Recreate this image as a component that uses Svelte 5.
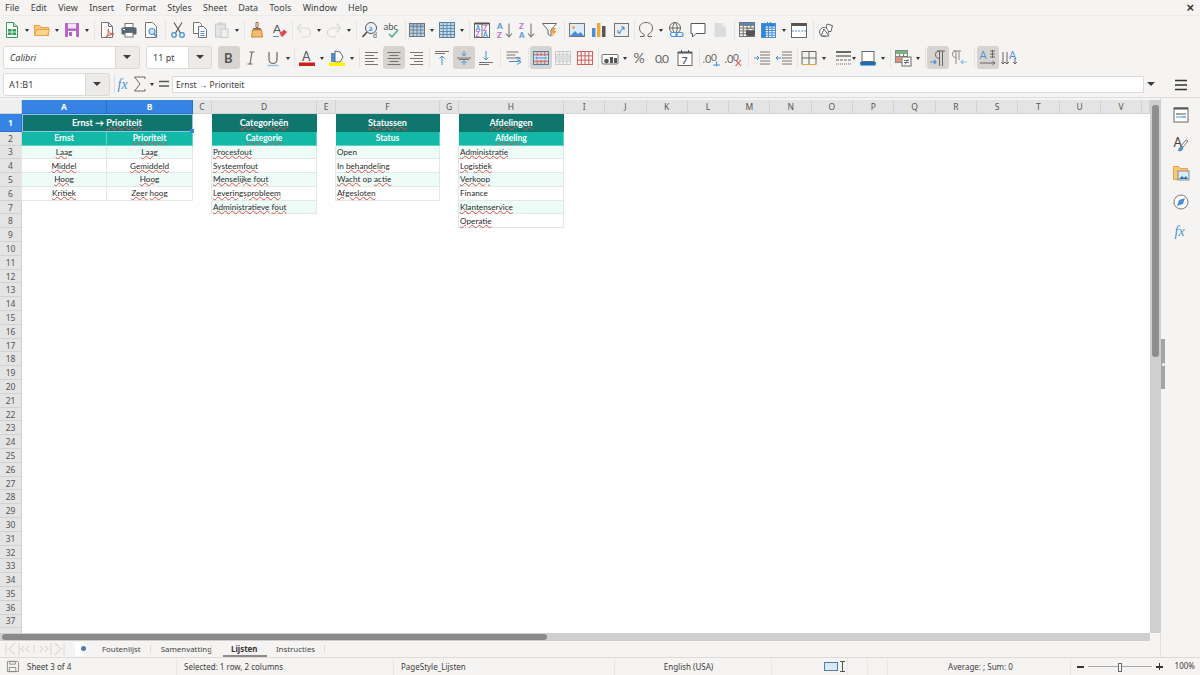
<script>
  const menus = ['File','Edit','View','Insert','Format','Styles','Sheet','Data','Tools','Window','Help'];
  const grid = (x,y,w,h,c,r,col,head='') => {
    let s = head ? `<rect x="${x}" y="${y}" width="${w}" height="${h/(r)}" fill="${head}"/>` : '';
    s += `<rect x="${x}" y="${y}" width="${w}" height="${h}" fill="none" stroke="${col}"/>`;
    for (let i=1;i<c;i++) s += `<path d="M${x+i*w/c} ${y}v${h}" stroke="${col}"/>`;
    for (let i=1;i<r;i++) s += `<path d="M${x} ${y+i*h/r}h${w}" stroke="${col}"/>`;
    return s;
  };
  const lines = (x,y,ws,gap,col) => ws.map((w,i)=>`<path d="M${x} ${y+i*gap+.5}h${w}" stroke="${col}"/>`).join('');
  const clines = (cx,y,ws,gap,col) => ws.map((w,i)=>`<path d="M${cx-w/2} ${y+i*gap+.5}h${w}" stroke="${col}"/>`).join('');
  const rlines = (rx,y,ws,gap,col) => ws.map((w,i)=>`<path d="M${rx-w} ${y+i*gap+.5}h${w}" stroke="${col}"/>`).join('');
  const txt = (x,y,s,size,col,w=400) => `<text x="${x}" y="${y}" font-family="Lato" font-size="${size}" font-weight="${w}" fill="${col}">${s}</text>`;
  const G='#747474', B='#4a90d9', L='#c9c9c9';
  const icons = {
    new:`<path d="M3.5 1.5h7l4 4v11h-11z" fill="#fff" stroke="#3c9a5f"/><path d="M10.5 1.5v4h4" fill="#bfe3cb" stroke="#3c9a5f"/><rect x="5" y="8" width="8" height="6" fill="#3c9a5f"/><path d="M9 8v6M5 11h8" stroke="#cfeeda"/>`,
    open:`<path d="M1.5 14.5V4.5h5l2 2h7v8z" fill="#f9c778" stroke="#e8a34a"/><path d="M1.5 14.5l2-6h13l-2 6z" fill="#fcd592" stroke="#e8a34a"/>`,
    save:`<path d="M2 2h14v14H2z" fill="#b865c6"/><rect x="5" y="2.5" width="8" height="5" fill="#f3e3f6"/><rect x="5" y="10" width="8" height="6" fill="#fff"/><rect x="6" y="11" width="3" height="4" fill="#b865c6"/>`,
    pdf:`<path d="M3.5 1.5h7l4 4v11h-11z" fill="#fff" stroke="${G}"/><path d="M10.5 1.5v4h4" fill="none" stroke="${G}"/><path d="M8 16c3-3 2-7 2-8 1 4 3 5 6 5-3 0-5 1-8 3z" fill="#f3c4c0" stroke="#d8453c" stroke-width=".9"/>`,
    print:`<rect x="5" y="2.5" width="8" height="4" fill="#fff" stroke="${G}"/><rect x="1.5" y="6.5" width="15" height="7" rx="1" fill="#566773"/><rect x="5" y="11.5" width="8" height="4.5" fill="#fff" stroke="${G}"/><path d="M3 8.5h2" stroke="#fff"/>`,
    preview:`<path d="M3.5 1.5h7l4 4v11h-11z" fill="#fff" stroke="${G}"/><circle cx="10" cy="10.5" r="3" fill="#d6e8f8" stroke="${B}" stroke-width="1.2"/><path d="M12 13l3 3" stroke="${B}" stroke-width="1.6"/>`,
    cut:`<path d="M5 1.500l6.500 10.500M13 1.500L6.500 12" stroke="#555" stroke-width="1.100"/><circle cx="5" cy="14" r="2.300" fill="none" stroke="${B}" stroke-width="1.300"/><circle cx="13" cy="14" r="2.300" fill="none" stroke="${B}" stroke-width="1.300"/>`,
    copy:`<path d="M2.500 1.500h6l2 2v9h-8z" fill="#fff" stroke="${G}"/><path d="M7.500 5.500h5l3 3v8h-8z" fill="#fff" stroke="${G}"/>${lines(9.5,10,[4,4,4],2,B)}`,
    paste:`<rect x="2.500" y="3" width="10" height="13" fill="#e4e4e4" stroke="${L}"/><rect x="5" y="1.500" width="5" height="3" fill="#d0d0d0"/><path d="M8 8h7v8.500H8z" fill="#efefef" stroke="${L}"/>`,
    clone:`<path d="M8 1.500h2v5H8z" fill="#fff" stroke="#a0662a"/><path d="M5 7h8v2H5z" fill="#777"/><path d="M4.500 9h9l1 7h-11z" fill="#f7bb76" stroke="#d4832e"/>`,
    clear:txt(3,12,'A',12,'#555')+`<path d="M3 15.500h6" stroke="${B}"/><path d="M10 12.500l4-4 3 2.500-4 4.500h-2z" fill="#e5484d"/>`,
    undo:`<path d="M3 7h8a4.500 4.500 0 0 1 0 9H7" fill="none" stroke="#d8d8d8" stroke-width="1.200"/><path d="M6.500 2.500L2.500 7l4 4.500" fill="none" stroke="#d8d8d8" stroke-width="1.200"/>`,
    redo:`<path d="M15 7H7a4.500 4.500 0 0 0 0 9h4" fill="none" stroke="#d8d8d8" stroke-width="1.200"/><path d="M11.500 2.500l4 4.500-4 4.500" fill="none" stroke="#d8d8d8" stroke-width="1.200"/>`,
    find:`<circle cx="10" cy="7" r="5.500" fill="#eaf3fb" stroke="#555"/><path d="M6 11l-4.500 5" stroke="#555" stroke-width="1.800"/>`+txt(7.5,9.500,'a',8,B,700)+txt(12,16.500,'d',7,'#555'),
    spell:txt(.5,8.500,'abc',9.500,'#555')+`<path d="M6 13l3 3 6-7" fill="none" stroke="#4caf7a" stroke-width="1.500"/>`,
    table:grid(1.5,2.5,15,13,4,4,G,'#8fbde9')+`<rect x="2" y="6" width="14" height="9" fill="#5b9bd5" opacity=".35"/>`,
    cols:grid(1.5,1.5,15,15,4,5,'#5d7f99')+`<rect x="2" y="2" width="14" height="14" fill="#6aa7de" opacity=".35"/>`,
    sort:`<rect x="1.500" y="2.500" width="15" height="14" fill="#fff" stroke="#666"/><rect x="1.500" y="1.500" width="15" height="2" fill="#555"/><path d="M9 3v13.500" stroke="#666"/>`+txt(2.500,10,'A',7,B,700)+txt(2.500,16,'Z',7,'#c56bcf',700)+txt(10,10,'Z',7,'#c56bcf',700)+txt(10,16,'A',7,B,700),
    az:txt(1,8,'A',8,B,700)+txt(1,16.500,'Z',8,'#c56bcf',700)+`<path d="M13 2.500v13M10 12.500l3 3.500 3-3.500" fill="none" stroke="#777" stroke-width="1.100"/>`,
    za:txt(1,8,'Z',8,'#c56bcf',700)+txt(1,16.500,'A',8,B,700)+`<path d="M13 2.500v13M10 12.500l3 3.500 3-3.500" fill="none" stroke="#777" stroke-width="1.100"/>`,
    filter:`<path d="M1.500 2.500h14l-5.500 6.500v6l-3-2v-4z" fill="#fff" stroke="#666"/><path d="M12 7l-2.500 5h2.500l-1.500 4.500 5-6.500h-2.500l2-3z" fill="#f4a03a"/>`,
    image:`<rect x="1.500" y="2.500" width="15" height="13" fill="#d9ecfb" stroke="${G}"/><circle cx="5.500" cy="6.500" r="1.500" fill="#f4a83a"/><path d="M2 15l5-5 3 3 2.500-2 3.500 4z" fill="#4a90d9"/>`,
    chart:`<rect x="2" y="7" width="3.500" height="9" fill="#4a90d9"/><rect x="7" y="2" width="3.500" height="14" fill="#f4a83a"/><rect x="12" y="5" width="3.500" height="11" fill="#555"/>`,
    pivot:`<rect x="2.500" y="2.500" width="14" height="13" fill="#efefef" stroke="${G}"/><path d="M7 12l5-6M12 6h-3M12 6v3M6 12h3M6 12v-3" stroke="${B}" fill="none" stroke-width="1.100"/>`,
    omega:`<path d="M3 15.500h4v-2c-3-1.500-4.500-3.500-4.500-6.500 0-3.500 2.800-5.500 6.500-5.500s6.500 2 6.500 5.500c0 3-1.500 5-4.500 6.500v2h4" fill="none" stroke="#666"/>`,
    link:`<circle cx="8" cy="7" r="5.500" fill="none" stroke="#666"/><path d="M2.500 7h11M8 1.500c-3 3-3 8 0 11M8 1.500c3 3 3 8 0 11" fill="none" stroke="#666"/><rect x="3.500" y="11.500" width="6.500" height="4" rx="2" fill="#fff" stroke="${B}" stroke-width="1.200"/><rect x="9" y="11.500" width="7" height="4" rx="2" fill="none" stroke="${B}" stroke-width="1.200"/>`,
    comment:`<path d="M2 2.500h14v10H7l-3.500 3.500v-3.500H2z" fill="#fff" stroke="#555"/>`,
    hf:`<path d="M3.500 2h8l3.500 3.500V16h-11.500z" fill="#dcdcdc"/><path d="M11.500 2v3.500H15" fill="#eee"/>`,
    freeze:grid(1.5,1.5,15,14,4,5,G,'#4a90d9')+`<rect x="8" y="9" width="9" height="6" rx="2" fill="#555"/><rect x="10" y="7.500" width="5" height="2" fill="#fff" stroke="#555" stroke-width=".6"/>`,
    freezeb:grid(1.5,2.5,14,14,4,6,B)+`<rect x="2" y="3" width="3.500" height="13" fill="#2f86d6"/><rect x="2" y="3" width="13" height="2.300" fill="#2f86d6"/><path d="M7 1l2 2 2-2" fill="none" stroke="#2f86d6"/>`,
    split:`<rect x="1.500" y="2.500" width="15" height="14" fill="#fff" stroke="#666"/><rect x="1.500" y="2" width="15" height="3" fill="#555"/><path d="M2 10h14" stroke="${B}" stroke-dasharray="2 1"/>`,
    shapes:`<path d="M9 3l5.500 1.500-1.500 6H8z" fill="#fff" stroke="#666"/><circle cx="6" cy="11" r="4.500" fill="#fff" stroke="#666"/><path d="M6 8l5 7H3z" fill="#fff" stroke="#666"/>`,
    bold:txt(4,14,'B',13,'#555',700),
    italic:`<path d="M7.500 3h5M5.500 15h5M10 3L8 15" stroke="#666" stroke-width="1.100" fill="none"/>`,
    under:`<path d="M5 3v7.500a4 4 0 0 0 8 0V3" fill="none" stroke="#666" stroke-width="1.200"/><path d="M3.500 16.500h11" stroke="#8ec0ea" stroke-width="1.400"/>`,
    fcolor:txt(4,12,'A',12.500,'#555')+`<rect x="1" y="13.500" width="16" height="3.500" fill="#c9211e"/>`,
    bcolor:`<path d="M3 4h7l3 3v6H3z" fill="#4a90d9"/><path d="M7 2l5 1 3 5-3 5H7z" fill="#fff" stroke="#666"/><rect x="1" y="13.500" width="16" height="3.500" fill="#fff200"/>`,
    left:lines(2,3,[13,9,13,9,13],3,G),
    center:clines(9,3,[13,9,13,9,13],3,G),
    right:rlines(16,3,[13,9,13,9,13],3,G),
    top:lines(2,2,[14,10],2,G)+`<path d="M9 16V7M6.500 9.500L9 7l2.500 2.500" fill="none" stroke="${B}"/>`,
    vcenter:`<path d="M2 9h14M4 10.500h10" stroke="${G}"/><path d="M9 2v5M6.500 4.500L9 7l2.500-2.500M9 16v-4M6.500 14L9 11.500l2.500 2.500" fill="none" stroke="${B}"/>`,
    bottom:lines(2,13,[14,10],2,G)+`<path d="M9 2v9M6.500 8.500L9 11l2.500-2.500" fill="none" stroke="${B}"/>`,
    wrap:lines(1.500,2.500,[12,9,14],3,G)+`<path d="M4 12.500h9a2 2 0 0 0 0-4h-2" fill="none" stroke="${B}"/><path d="M12 10.500l4 2.500-4 2.500" fill="none" stroke="${B}"/>`,
    merge:grid(1.5,2.5,15,13,4,4,'#c56b66')+`<rect x="2" y="7" width="14" height="4" fill="#d6e6f5"/><path d="M4 9h10M5 8l-1.500 1L5 10M13 8l1.500 1L13 10" fill="none" stroke="${B}"/><path d="M1.500 2.500h15v13h-15z" fill="none" stroke="#4a7fb0"/>`,
    unmerge:grid(1.5,2.5,15,13,4,4,'#c9c9c9')+`<rect x="2" y="7" width="14" height="4" fill="#dcdcdc"/>`,
    msplit:grid(1.5,2.5,15,13,4,3,'#d0625c'),
    fmt:`<rect x="1" y="5.500" width="16" height="9.500" rx="1" fill="#fff" stroke="${G}"/><circle cx="5.500" cy="12" r="2.300" fill="#555"/><rect x="9" y="8" width="3" height="6" fill="#555"/><rect x="13" y="9" width="3" height="5" fill="#555"/>`,
    pct:txt(1.500,14,'%',14,'#666'),
    num:txt(1,14,'0',12,'#666')+txt(8,14,'0',12,'#666')+`<circle cx="8" cy="13.500" r=".7" fill="#666"/>`,
    date:`<rect x="2" y="3.500" width="14" height="13" fill="#fff" stroke="#666"/><rect x="2" y="2.500" width="14" height="2" fill="#555"/><path d="M5.500 1v3M12.500 1v3" stroke="#555"/>`+txt(5.800,14.500,'7',10,'#555',700),
    addd:txt(-.5,14,'.0',11,'#666')+txt(8,12,'0',10,'#666')+`<path d="M10 16h7M13.500 12.500v5" stroke="${B}" stroke-width="1.100"/>`,
    deld:txt(-.5,14,'.0',11,'#666')+txt(8,12,'0',10,'#666')+`<path d="M10.500 11l5.500 6M16 11l-5.500 6" stroke="#e5484d" stroke-width="1.100"/>`,
    indent:lines(7,2.500,[10,10,10,10,10],3,G)+`<path d="M1 9h5M4 7l2 2-2 2" fill="none" stroke="${B}"/>`,
    outdent:lines(7,2.500,[10,10,10,10,10],3,G)+`<path d="M1 9h5M3 7L1 9l2 2" fill="none" stroke="${B}"/>`,
    borders:`<path d="M2 2.500h14v13H2zM9 2.500v13M2 9h14" fill="none" stroke="#666"/><path d="M2 15.500h14" stroke="#e8a34a"/>`,
    bstyle:`<path d="M2 3h15" stroke="#444" stroke-width="1.600"/><path d="M2 7h15" stroke="#555" stroke-width="1.200"/><path d="M2 11h15" stroke="#666" stroke-dasharray="3 1"/><path d="M2 15h15" stroke="#666" stroke-dasharray="1 1"/>`,
    bcolor2:`<rect x="3" y="2.500" width="12" height="10" fill="#fff" stroke="#666"/><path d="M1 13h16l-.5 3.500h-15z" fill="#1b6fb5"/>`,
    cond:grid(1.5,1.5,12,12,3,4,'#7e8b7e')+`<rect x="2" y="2" width="11" height="3" fill="#77b77f"/><rect x="2" y="8" width="5" height="5" fill="#e08d86"/><rect x="8" y="8" width="9" height="9" fill="#fff" stroke="#666"/><path d="M10 11.500h5M10 13.500h5M11 15.500l3-5" stroke="#555" stroke-width=".8"/>`,
    ltr:`<path d="M8 2h8M10.500 2v15M13.500 2v15M10.500 9.500C8 9.500 6.500 8 6.500 5.700S8 2 10.500 2" fill="none" stroke="#666"/><path d="M1 13h6M5 11l2 2-2 2" fill="none" stroke="${B}" stroke-width="1.200"/>`,
    rtl:`<path d="M2 2h8M5 2v13M8 2v9M5 8.500C3 8.500 1.500 7.500 1.500 5.200S3 2 5 2" fill="none" stroke="#888"/><path d="M10 13h6M12 11l-2 2 2 2" fill="none" stroke="#8ec0ea" stroke-width="1.200"/>`,
    hor:txt(.5,9.500,'A',10.500,B)+`<path d="M11 2h5M11 5h5M11 8h5M13.500 1v8" stroke="#555" stroke-width=".8"/><path d="M1 14h15M13.500 12l2.500 2-2.500 2" fill="none" stroke="#666"/>`,
    ver:`<path d="M2 3v12M0 13l2 2 2-2M6 3v12M4 13l2 2 2-2M14 9v6M12 13l2 2 2-2" fill="none" stroke="#666"/>`+txt(8,10,'A',10.500,B),
    menu:`<path d="M3 4.500h12M3 9h12M3 13.500h12" stroke="#333" stroke-width="1.400"/>`,
    props:`<rect x="2" y="2" width="14" height="14" fill="#fff" stroke="#666"/><rect x="2" y="1.500" width="14" height="2" fill="#555"/><path d="M4 8h10" stroke="#555"/><path d="M4 11h10" stroke="${B}"/><path d="M6 7v2M12 10v2" stroke="${B}"/>`,
    styles:txt(1.500,12,'A',12.500,'#444')+`<path d="M16 6l-5 6-2-1 5-6z" fill="#fff" stroke="#555" stroke-width=".8"/><path d="M6 16c0-3 2-4.500 4-4.500 1 0 1.500 1 1 2.500-.6 2-3 2.500-5 2z" fill="#4a90d9"/>`,
    gallery:`<path d="M1.500 15.500v-13h5l2 2h7v11z" fill="#f9c778" stroke="#e8a34a"/><rect x="6" y="7" width="11" height="9" fill="#dcebf8" stroke="${G}" stroke-width=".8"/><path d="M7 15l3-3 2 2 2-2 2 3z" fill="#2e74b5"/>`,
    nav:`<circle cx="9" cy="9" r="7" fill="#fff" stroke="#777"/><path d="M13 5l-2 6-6 2 2-6z" fill="#4a90d9"/>`,
    fx:`<text x="2.500" y="13.500" font-family="Liberation Serif" font-style="italic" font-size="14" fill="#4a90d9">fx</text>`,
    sigma:`<path d="M14 4V2H3.500L9 9l-5.500 7H14v-2" fill="none" stroke="#666"/>`,
    eq:`<path d="M4 6.500h10M4 11h10" stroke="#555" stroke-width="1.500"/>`,
    floppy:`<path d="M1.500 1.500h11l1 1v10h-12z" fill="none" stroke="#888"/><path d="M4 1.500h6v3H4zM3.500 8h7v4.500h-7z" fill="none" stroke="#888"/>`
  };
  const tb1 = ['new','d','open','d','save','d','s5','pdf','print','preview','s5','cut','copy','paste','d','s5','clone','clear','s3','undo','d','redo','d','s6','find','spell','s3','table','d','cols','d','s5','sort','g1','az','za','g1','filter','s5','image','chart','pivot','s3','omega','d','link','comment','hf','s5','freeze','freezeb','d','split','s6','shapes'];
  const tb2 = ['bold*','italic','under','d','s4','fcolor','d','bcolor','d','s5','left','center*','right','s4','top','vcenter*','bottom','s6','wrap','s5','merge*','unmerge','msplit','s3','fmt','d','g1','pct','num','date','s5','addd','deld','s6','indent','outdent','s3','borders','d','g4','bstyle','g-4','d','g-1','bcolor2','d','s5','cond','d','s5','ltr*','rtl','s6','hor*','ver'];
  const side = ['props','styles','gallery','nav','fx'];
  const parse = (list) => list.map((raw) => {
    if (raw === 'd') return { kind: 'd' };
    const m = raw.match(/^([sg])(-?\d+)$/);
    if (m) return { kind: m[1], n: +m[2] };
    const on = raw.endsWith('*');
    return { kind: 'b', on, name: on ? raw.slice(0, -1) : raw };
  });
  const colNames = 'ABCDEFGHIJKLMNOPQRSTUV'.split('').concat('');
  const rows = Array.from({ length: 38 }, (_, i) => i + 1);
  const data = {
    A: ['Ernst → Prioriteit','Ernst','Laag','Middel','Hoog','Kritiek'],
    B: [null,'Prioriteit','Laag','Gemiddeld','Hoog','Zeer hoog'],
    D: ['Categorieën','Categorie','Procesfout','Systeemfout','Menselijke fout','Leveringsprobleem','Administratieve fout'],
    F: ['Statussen','Status','Open','In behandeling','Wacht op actie','Afgesloten'],
    H: ['Afdelingen','Afdeling','Administratie','Logistiek','Verkoop','Finance','Klantenservice','Operatie']
  };
  const clean = new Set(['Ernst','→','Status','Open','In','op','Finance']);
  const words = (t) => t.split(' ').map((w) => ({ w, bad: !clean.has(w) }));
  const cellClass = (c, r) => {
    const v = data[c]?.[r - 1];
    if (v === undefined) return 'cell';
    let k = 'cell filled';
    if (r === 1) k += ' title';
    else if (r === 2) k += ' sub';
    else k += r % 2 ? ' tint' : ' plain';
    if (r <= 2 || c === 'A' || c === 'B') k += ' mid';
    return k;
  };
</script>

{#snippet bar(list)}
  {#each parse(list) as it}
    {#if it.kind === 'd'}
      <span class="dd"></span>
    {:else if it.kind === 's'}
      <span class="sep" style="width:{it.n}px"></span>
    {:else if it.kind === 'g'}
      <span style="margin-left:{it.n}px"></span>
    {:else}
      <span class="btn" class:on={it.on}><svg viewBox="0 0 18 18" width="18" height="18">{@html icons[it.name]}</svg></span>
    {/if}
  {/each}
{/snippet}

<div class="app">
  <nav class="menubar">
    {#each menus as m}<span>{m}</span>{/each}
    <b class="close">×</b>
  </nav>
  <div class="toolbar t1">{@render bar(tb1)}</div>
  <div class="toolbar t2">
    <div class="combo font"><span class="field italic">Calibri</span><span class="arrow"></span></div>
    <div class="combo size"><span class="field">11 pt</span><span class="arrow"></span></div>
    {@render bar(tb2)}
  </div>
  <div class="formula">
    <div class="combo name"><span class="field">A1:B1</span><span class="arrow"></span></div>
    <span class="fsep"></span>
    <span class="fbtn"><svg viewBox="0 0 18 18" width="18" height="18">{@html icons.fx}</svg></span>
    <span class="fbtn"><svg viewBox="0 0 18 18" width="18" height="18">{@html icons.sigma}</svg></span>
    <span class="dd"></span>
    <span class="fbtn"><svg viewBox="0 0 18 18" width="18" height="18">{@html icons.eq}</svg></span>
    <div class="input">Ernst → Prioriteit</div>
    <span class="arrow-only"></span>
  </div>

  <div class="work">
    <div class="left">
      <div class="sheetrow">
        <div class="grid">
          <div class="corner"></div>
          {#each colNames as c}
            <div class="ch" class:sel={c === 'A' || c === 'B'}>{c}</div>
          {/each}
          {#each rows as r}
            <div class="rh" class:sel={r === 1}>{r < 38 ? r : ''}</div>
            {#each colNames as c}
              {#if r === 1 && c === 'A'}
                <div class="cell filled title mid merged">
                  <span>Ernst → <u>Prioriteit</u></span>
                  <i class="cursor"></i>
                </div>
              {:else if !(r === 1 && c === 'B')}
                <div class={cellClass(c, r)}>
                  {#if data[c]?.[r - 1]}
                    <span>{#each words(data[c][r - 1]) as t, i}{#if i}{' '}{/if}{#if t.bad}<u>{t.w}</u>{:else}{t.w}{/if}{/each}</span>
                  {/if}
                </div>
              {/if}
            {/each}
          {/each}
        </div>
        <div class="vscroll"><div class="vthumb"></div></div>
      </div>
      <div class="hscroll"><div class="hthumb"></div></div>
      <div class="tabs">
        <svg class="tabnav" viewBox="0 0 60 14" width="60" height="14">
          <path d="M1 1v12M10 1L4 7l6 6M14 1v12M19 4l-3 3 3 3M24 4l-3 3 3 3M29 3v8M35 4l3 3-3 3M40 4l3 3-3 3M46 1v12M50 1l6 6-6 6M59 1v12" fill="none" stroke="#dcdbd8" stroke-width="1.200"/>
        </svg>
        <div class="addtab"><em></em></div>
        <span class="tab t-a">Foutenlijst</span>
        <span class="tab t-b">Samenvatting</span>
        <span class="tab active">Lijsten</span>
        <span class="tab t-d">Instructies</span>
      </div>
    </div>
    <aside class="sidebar">
      <i class="handle"></i>
      <svg viewBox="0 0 18 18" width="18" height="18" class="hamb">{@html icons.menu}</svg>
      {#each side as s}
        <svg viewBox="0 0 18 18" width="18" height="18">{@html icons[s]}</svg>
      {/each}
    </aside>
  </div>

  <footer class="status">
    <div class="st s-sheet"><svg viewBox="0 0 14 14" width="13" height="13">{@html icons.floppy}</svg><span>Sheet 3 of 4</span></div>
    <div class="st s-sel">Selected: 1 row, 2 columns</div>
    <div class="st s-page">PageStyle_Lijsten</div>
    <div class="st s-lang">English (USA)</div>
    <div class="st s-mode"><i class="rect"></i><i class="ibeam"></i></div>
    <div class="st s-a"></div>
    <div class="st s-b"></div>
    <div class="st s-sum">Average: ; Sum: 0</div>
    <div class="st s-zoom">
      <span class="minus"></span>
      <span class="slider"><i></i></span>
      <span class="plus"></span>
      <span class="pct">100%</span>
    </div>
  </footer>
</div>

<style>
  :global(body) { margin: 0; background: #f5f4f2; }
  svg { overflow: visible; }
  .app {
    width: 1200px; height: 675px; overflow: hidden;
    display: flex; flex-direction: column;
    background: #f5f4f2; color: #3d3d3d;
    font-family: "Noto Sans", sans-serif; font-size: 9px;
  }
  .menubar {
    height: 16px; flex: none; display: flex; align-items: center;
    gap: 11.300px; padding: 0 4px 0 5px; font-size: 9px; border-bottom: 1px solid #ecebe9;
    box-sizing: border-box;
  }
  .close { margin-left: auto; font-size: 13px; font-family: "Liberation Sans", sans-serif; line-height: 1; color: #333; margin-right: 2px; }
  .toolbar { flex: none; display: flex; align-items: center; }
  .t1 { height: 28px; padding-left: 1px; }
  .t2 { height: 27px; padding-left: 3px; }
  .btn { width: 22px; height: 23px; flex: none; display: flex; align-items: center; justify-content: center; border-radius: 3px; }
  .btn.on { background: #d7d4d0; }
  .dd { width: 8px; flex: none; height: 10px; position: relative; }
  .dd::after { content: ""; position: absolute; left: 1.500px; top: 4px; border: 2.500px solid transparent; border-top: 3px solid #333; border-bottom: 0; }
  .sep { flex: none; height: 22px; position: relative; }
  .sep::after { content: ""; position: absolute; left: 50%; top: 1px; bottom: 1px; width: 1px; background: #e6e5e3; }
  .combo { display: flex; height: 23px; flex: none; border: 1px solid #dcdbd8; border-radius: 3px; box-sizing: border-box; overflow: hidden; background: #ecebe9; }
  .field { flex: 1; background: #fff; display: flex; align-items: center; padding-left: 6px; font-size: 9px; border-right: 1px solid #dcdbd8; }
  .field.italic { font-style: italic; }
  .arrow { width: 23px; flex: none; position: relative; }
  .arrow::after, .arrow-only::after { content: ""; position: absolute; left: 7px; top: 8px; border: 4px solid transparent; border-top: 4px solid #3d3d3d; border-bottom: 0; }
  .font { width: 137px; margin-right: 6px; }
  .size { width: 66px; margin-right: 6px; }
  .size .arrow { width: 22px; }
  .formula { height: 27px; flex: none; display: flex; align-items: center; padding-left: 3px; border-bottom: 1px solid #dfdedc; box-sizing: border-box; }
  .name { width: 107px; }
  .name .field { padding-left: 5px; }
  .fsep { width: 1px; height: 18px; background: #e0dfdd; margin: 0 1px 0 4px; }
  .fbtn { width: 16px; height: 18px; flex: none; display: flex; justify-content: center; }
  .input { width: 972px; height: 17px; box-sizing: border-box; background: #fff; border: 1px solid #dddcda; padding-left: 3px; line-height: 15px; font-size: 8.500px; }
  .arrow-only { width: 15px; height: 17px; flex: none; position: relative; }
  .arrow-only::after { left: 3px; top: 6px; }
  .work { flex: 1; min-height: 0; display: flex; position: relative; }
  .left { width: 1161px; flex: none; display: flex; flex-direction: column; padding-top: 2px; box-sizing: border-box; border-right: 1px solid #e1e0de; }
  .sheetrow { height: 533px; display: flex; flex: none; background: #fff; }
  .grid {
    width: 1150px; height: 533px; overflow: hidden; flex: none; display: grid; background: #fff;
    grid-template-columns: 22px 85px 86px 19px 105px 19px 104px 19px 105px repeat(14, 41.300px) 1fr;
    grid-template-rows: 14px 18px 13.500px repeat(36, 13.800px);
    font-family: Lato, sans-serif; font-size: 8.200px;
  }
  .corner, .ch, .rh { background: #e4e4e4; color: #555; border-right: 1px solid #d2d2d2; border-bottom: 1px solid #d2d2d2; box-sizing: border-box; display: flex; align-items: center; justify-content: center; font-family: "Noto Sans", sans-serif; font-size: 8.500px; }
  .corner { background: #efefef; }
  .sel { background: #3584e4; color: #fff; font-weight: 700; border-color: #2a6fc5; }
  .cell { min-width: 0; overflow: visible; white-space: nowrap; display: flex; align-items: center; color: #2a2a2a; line-height: 1; position: relative; }
  .filled { box-sizing: border-box; border-bottom: 1px solid #e2e8e7; border-right: 1px solid #e2e8e7; padding-left: 1px; }
  .filled:not(.title, .sub) { box-shadow: -1px 0 0 #e2e8e7; }
  .tint { background: #eefcf8; }
  .plain { background: #fff; }
  .mid { justify-content: center; padding-left: 0; }
  .title { background: #0f766e; color: #fff; font-weight: 700; font-size: 9px; border-color: #0f766e; }
  .sub { background: #14b8a6; color: #fff; font-weight: 700; font-size: 8.500px; border-color: #5fd2c4; }
  .merged { grid-column: span 2; outline: 1px solid #8fc3f0; outline-offset: -1px; z-index: 2; }
  .cursor { position: absolute; right: -2px; bottom: -2px; width: 4px; height: 4px; background: #3584e4; }
  u { text-decoration: underline wavy #e0504c .6px; text-underline-offset: 0; }
  .vscroll { width: 11px; flex: none; background: #cfcfcf; position: relative; }
  .vthumb { position: absolute; left: 2px; right: 2px; top: 5px; height: 252px; background: #8e8e8e; border-radius: 3px; }
  .hscroll { height: 8px; width: 1150px; flex: none; background: #cfcfcf; padding: 1px 0 1px 2px; box-sizing: border-box; }
  .hthumb { width: 545px; height: 6px; background: #8a8a8a; border-radius: 3px; }
  .tabs { flex: 1; display: flex; align-items: center; font-size: 7.900px; position: relative; }
  .tabnav { margin-left: 5px; flex: none; }
  .addtab { width: 9px; height: 14px; background: #fff; margin: 0 7px 0 10px; position: relative; border-radius: 0 0 2px 2px; flex: none; }
  .addtab em { position: absolute; left: 6px; top: 4px; width: 5px; height: 5px; background: #4a7fb8; border-radius: 50%; }
  .tab { padding: 0 11px; height: 16px; line-height: 16px; position: relative; color: #444; flex: none; }
  .tab::after { content: ""; position: absolute; right: 0; top: 4px; height: 8px; width: 1px; background: #dddcda; }
  .t-a { padding-right: 10px; }
  .t-b { padding: 0 0 0 10px; }
  .t-d { padding: 0 10px 0 9px; }
  .tab.active { font-weight: 700; box-shadow: inset 0 -2px 0 #8c8c8c; color: #333; padding: 0 9.500px 0 8px; margin-left: 11px; }
  .tab.active::after { display: none; }
  .sidebar { flex: 1; display: flex; flex-direction: column; align-items: center; gap: 11px; position: relative; padding-top: 8px; box-sizing: border-box; }
  .sidebar svg { flex: none; }
  .hamb { display: block; position: absolute; top: -22px; }
  .handle { position: absolute; left: 0; top: 241px; width: 4px; height: 50px; background: #a4a4a4; }
  .handle::after { content: ""; position: absolute; left: 1px; top: 24px; width: 3px; height: 3px; border-radius: 50%; background: #fff; }
  .status { height: 18px; flex: none; display: flex; align-items: center; border-top: 1px solid #dcdbd9; box-sizing: border-box; font-size: 8px; }
  .st { height: 100%; box-sizing: border-box; display: flex; align-items: center; border-right: 1px solid #e9e8e6; flex: none; }
  .s-sheet { width: 177px; padding-left: 6px; gap: 8px; }
  .s-sel { width: 217px; padding-left: 7px; }
  .s-page { width: 221px; padding-left: 7px; }
  .s-lang { width: 157px; justify-content: center; padding-right: 9px; }
  .s-mode { width: 76px; justify-content: flex-end; gap: 2px; padding-right: 2px; }
  .rect { width: 12px; height: 7px; background: #dbe9f7; border: 1px solid #4a7fb8; }
  .ibeam { width: 5px; height: 11px; border-top: 1px solid #555; border-bottom: 1px solid #555; position: relative; box-sizing: border-box; }
  .ibeam::after { content: ""; position: absolute; left: 2px; top: 0; bottom: 0; width: 1px; background: #555; }
  .s-a, .s-b { width: 20px; }
  .s-sum { width: 183px; justify-content: center; padding-left: 3px; }
  .s-zoom { flex: 1; border: 0; position: relative; }
  .minus { position: absolute; left: 6px; top: 8px; width: 7px; height: 1.500px; background: #333; }
  .plus { position: absolute; left: 85px; top: 8px; width: 7px; height: 1.500px; background: #333; }
  .plus::after { content: ""; position: absolute; left: 2.800px; top: -2.800px; width: 1.500px; height: 7px; background: #333; }
  .slider { position: absolute; left: 17px; top: 8px; width: 64px; height: 1px; background: #aaa; }
  .slider i { position: absolute; left: 30px; top: -3px; width: 2px; height: 7px; background: #fff; border: 1px solid #666; }
  .pct { position: absolute; right: 5px; top: 2px; }
</style>
